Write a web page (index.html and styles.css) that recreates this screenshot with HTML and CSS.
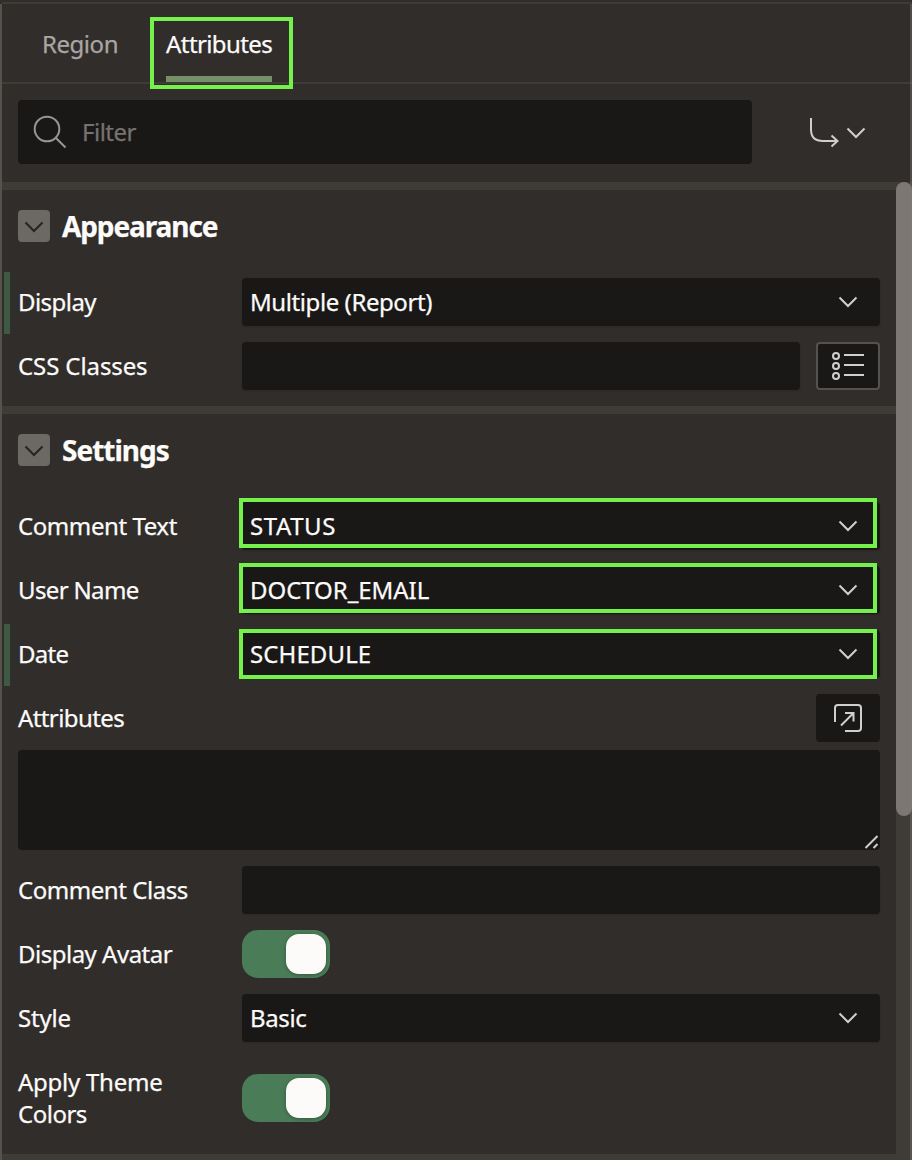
FILE: index.html
```html
<!DOCTYPE html>
<html lang="en">
<head>
<meta charset="utf-8">
<title>Property Editor</title>
<link rel="stylesheet" href="styles.css">
</head>
<body>
<svg class="defs" aria-hidden="true">
  <symbol id="chev" viewBox="0 0 20 12"><path d="M1.500 1.500 10 10l8.500-8.500"/></symbol>
</svg>
<main class="panel">
  <nav class="tabs">
    <a class="tab"><span class="t-region">Region</span></a>
    <a class="tab active"><span class="t-attrs">Attributes</span></a>
    <i class="mark mark-tab"></i>
  </nav>
  <div class="toolbar">
    <div class="filter">
      <svg class="search" viewBox="0 0 34 34"><circle cx="14" cy="14" r="12.300"/><path d="M22.700 22.700 32.500 32.500"/></svg>
      <span class="t-filter">Filter</span>
    </div>
    <div class="goto">
      <svg class="arrow" viewBox="0 0 30 32"><path d="M2 2v11.500q0 11.500 12 11.500H28M22.500 19.500 28.500 25l-6 5.500"/></svg>
      <svg class="chev"><use href="#chev"/></svg>
    </div>
  </div>
  <div class="scroller">
    <div class="groups">
      <section class="group">
        <h2 class="head"><span class="toggle"><svg class="chev"><use href="#chev"/></svg></span><span class="t-appearance">Appearance</span></h2>
        <div class="row changed"><label><span class="t-display">Display</span></label><div class="field select"><span class="t-multiple">Multiple (Report)</span><svg class="chev"><use href="#chev"/></svg></div></div>
        <div class="row"><label><span class="t-css">CSS Classes</span></label><div class="field"></div>
          <button class="btn outlined"><svg class="list" viewBox="0 0 32 30"><circle cx="4" cy="5" r="3"/><circle cx="4" cy="15" r="3"/><circle cx="4" cy="25" r="3"/><path d="M12 4H32M12 14H32M12 24H32"/></svg></button></div>
      </section>
      <section class="group settings">
        <h2 class="head"><span class="toggle"><svg class="chev"><use href="#chev"/></svg></span><span class="t-settings">Settings</span></h2>
        <div class="row"><label><span class="t-ctext">Comment Text</span></label><div class="field select"><span class="t-status">STATUS</span><svg class="chev"><use href="#chev"/></svg><i class="mark mark-1"></i></div></div>
        <div class="row"><label><span class="t-user">User Name</span></label><div class="field select"><span class="t-email">DOCTOR_EMAIL</span><svg class="chev"><use href="#chev"/></svg><i class="mark mark-2"></i></div></div>
        <div class="row changed"><label><span class="t-date">Date</span></label><div class="field select"><span class="t-schedule">SCHEDULE</span><svg class="chev"><use href="#chev"/></svg><i class="mark mark-3"></i></div></div>
        <div class="row split"><label><span class="t-attrs">Attributes</span></label>
          <button class="btn"><svg class="open" viewBox="0 0 28 28"><path d="M1 18V4q0-3 3-3H24q3 0 3 3V24q0 3-3 3H11M7 21.500 19 9.500M11 9h8.500v8.500"/></svg></button></div>
        <div class="textarea"><svg class="grip" viewBox="0 0 16 16"><path d="M1.500 14 13.500 2M9.500 14l4-4"/></svg></div>
        <div class="row"><label><span class="t-cclass">Comment Class</span></label><div class="field"></div></div>
        <div class="row"><label><span class="t-avatar">Display Avatar</span></label><span class="switch"><i></i></span></div>
        <div class="row"><label><span class="t-style">Style</span></label><div class="field select"><span class="t-basic">Basic</span><svg class="chev"><use href="#chev"/></svg></div></div>
        <div class="row tall"><label><span class="t-theme">Apply Theme</span><br><span class="t-colors">Colors</span></label><span class="switch"><i></i></span></div>
      </section>
    </div>
    <div class="track"><div class="thumb"></div></div>
  </div>
</main>
</body>
</html>
```
FILE: styles.css
```css
* { box-sizing: border-box; }
body {
  margin: 0;
  background: #312d2a;
  color: #fcfbfa;
  font: 24px/32px "Noto Sans", "Open Sans", sans-serif;
  -webkit-text-stroke: .25px currentColor;
}
svg { fill: none; stroke: #d1cfcd; stroke-width: 2; flex: none; display: block; }
.defs { position: absolute; width: 0; height: 0; }
span { white-space: nowrap; }

.panel {
  position: relative;
  width: 912px;
  height: 1160px;
  overflow: hidden;
  display: flex;
  flex-direction: column;
  padding-top: 2px;
}
.panel::before { content: ""; position: absolute; left: 0; top: 4px; bottom: 0; width: 2px; background: #55514d; }
.panel::after { content: ""; position: absolute; right: 0; top: 4px; bottom: 0; width: 2px; background: rgba(130, 126, 122, .4); }

.tabs {
  position: relative;
  display: flex;
  gap: 48px;
  height: 82px;
  margin-left: 2px;
  padding-left: 40px;
  border-top: 2px solid #3f3b37;
  border-bottom: 2px solid #3f3b37;
}
.tab { display: flex; align-items: center; color: #a9a6a3; height: 78px; padding-top: 2px; }
.tab.active { color: #fcfbfa; border-bottom: 6px solid #759069; width: 106px; padding-top: 8px; }

/* Highlight frames */
.mark { position: absolute; border: 4px solid #74f24b; width: 638px; height: 50px; left: -3px; }
.mark-tab { left: 148px; top: 13px; width: 143px; height: 72px; }
.mark-1 { top: -4px; }
.mark-2 { top: -3px; }
.mark-3 { top: -1px; }

.toolbar { display: flex; align-items: center; height: 98px; padding: 0 46px 2px 18px; justify-content: space-between; flex: none; }
.filter { display: flex; align-items: center; gap: 15px; width: 734px; height: 64px; padding-left: 15px; background: #1a1816; border-radius: 4px; color: #757270; }
.search { width: 34px; height: 34px; stroke: #989592; }
.goto { display: flex; align-items: center; gap: 7px; }
.goto .chev { margin-top: 2px; }
.arrow { width: 30px; height: 32px; }
.chev { width: 20px; height: 12px; }

.scroller { display: flex; flex: none; height: 978px; margin-left: 2px; }
.groups { flex: 1; display: flex; flex-direction: column; }
.group { border-top: 8px solid #3f3b37; height: 224px; padding: 0 16px; }
.settings { height: 748px; }
.groups::after { content: ""; height: 6px; background: #3f3b37; }
.head { display: flex; align-items: flex-start; gap: 12px; margin: 0; padding-top: 20px; height: 80px; font-size: 28px; line-height: 32px; font-weight: 700; }
.toggle { width: 32px; height: 32px; border-radius: 4px; background: #6c6863; display: flex; align-items: center; justify-content: center; padding-top: 2px; }
.toggle svg { stroke: #262321; }
.row { position: relative; display: flex; align-items: center; height: 64px; gap: 16px; }
.row label { width: 208px; flex: none; }
.split { justify-content: space-between; }
.changed::before { content: ""; position: absolute; left: -14px; top: 2px; width: 6px; height: 62px; background: #3e5a43; }
.field { position: relative; flex: 1; height: 48px; border-radius: 4px; background: #1a1816; display: flex; align-items: center; justify-content: space-between; padding: 0 22px 0 8px; box-shadow: 0 1px 2px rgba(0, 0, 0, .15); }
.btn { width: 64px; height: 48px; padding: 0; border: 0; border-radius: 4px; background: #1a1816; display: flex; align-items: center; justify-content: center; }
.outlined { border: 2px solid #55514d; }
.list { width: 32px; height: 30px; }
.open { width: 28px; height: 28px; }
.textarea { height: 100px; margin-bottom: 8px; border-radius: 4px; background: #1a1816; display: flex; justify-content: flex-end; align-items: flex-end; }
.grip { width: 16px; height: 16px; }
.switch { width: 88px; height: 48px; border-radius: 16px; background: #4a7d57; padding: 4px; display: flex; justify-content: flex-end; }
.switch i { width: 40px; height: 40px; border-radius: 13px; background: #fcfbfa; box-shadow: 0 1px 4px rgba(0, 0, 0, .3); }
.tall { height: 96px; }

.track { width: 16px; background: #3f3b37; }
.thumb { height: 634px; border-radius: 8px; background: #7c7772; }

/* Label tracking */
.t-region { letter-spacing: -.45px; }
.t-attrs { letter-spacing: -.6px; }
.t-filter { letter-spacing: -.5px; }
.t-appearance { letter-spacing: -1.1px; }
.t-display { letter-spacing: -.55px; }
.t-multiple { letter-spacing: -.42px; }
.t-css { letter-spacing: -.1px; }
.t-settings { letter-spacing: -1px; }
.t-ctext { letter-spacing: -.42px; }
.t-status { letter-spacing: .55px; }
.t-user { letter-spacing: -.65px; }
.t-email { letter-spacing: -.05px; }
.t-date { letter-spacing: -.75px; }
.t-schedule { letter-spacing: .1px; }
.t-cclass { letter-spacing: -.45px; }
.t-avatar { letter-spacing: -.5px; }
.t-style { letter-spacing: -.2px; }
.t-basic { letter-spacing: -.35px; }
.t-theme { letter-spacing: -.25px; }
.t-colors { letter-spacing: -.5px; }
```
